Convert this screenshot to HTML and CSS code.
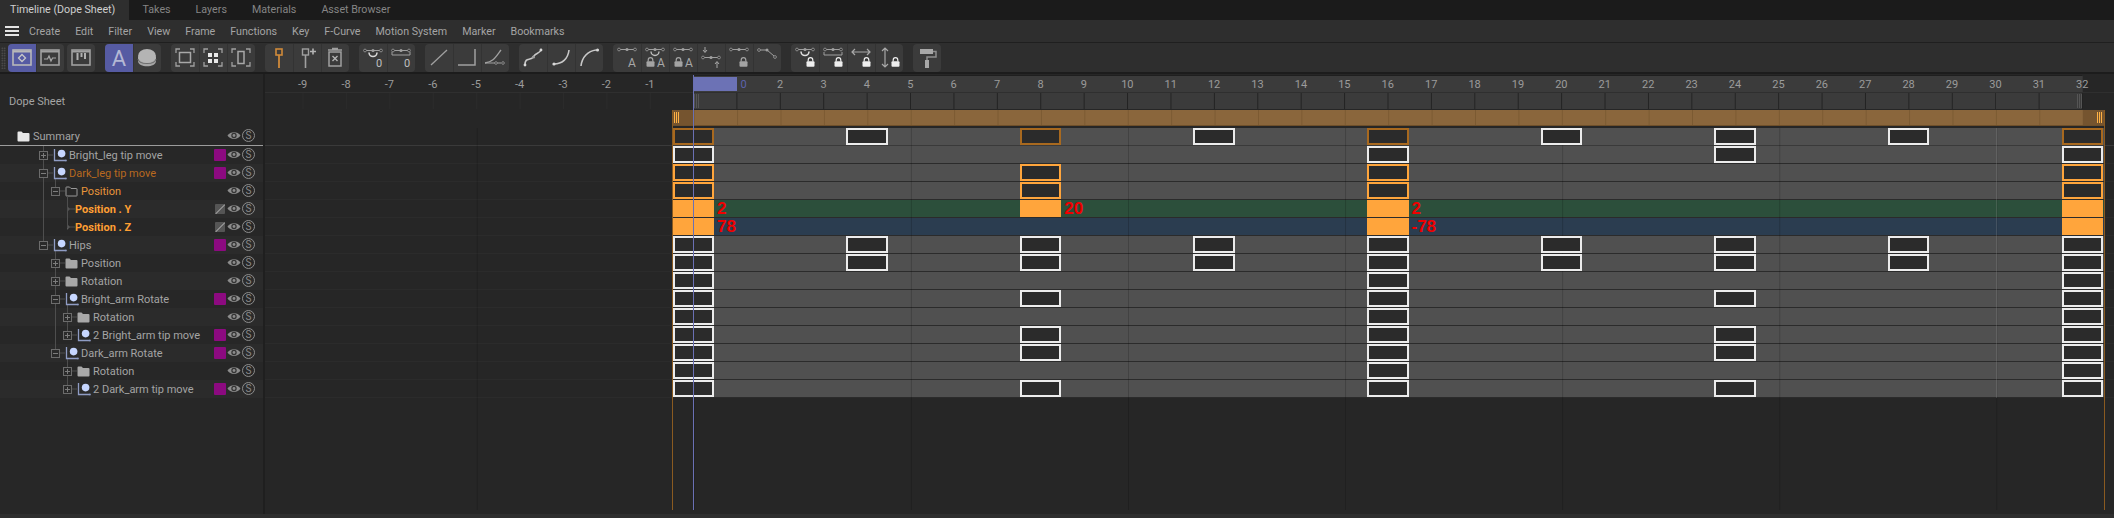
FILE: index.html
```html
<!DOCTYPE html>
<html>
<head>
  <title>Timeline (Dope Sheet)</title>
  <link rel="stylesheet" href="styles.css">
</head>
<body>

<!-- shared icon parts -->
<svg class="defs" width="0" height="0">
  <symbol id="eye" viewBox="0 0 14 11"><path d="M0.5 5.5C3 1 11 1 13.5 5.5C11 10 3 10 0.5 5.5Z" fill="#8c8c8c"/><circle cx="7" cy="5.5" r="2.7" fill="#333"/><circle cx="7" cy="5.5" r="1.4" fill="#8c8c8c"/></symbol>
  <symbol id="plus" viewBox="0 0 9 9"><rect x=".5" y=".5" width="8" height="8" fill="#2a2a2a" stroke="#6c6c6c"/><path d="M2 4.5H7M4.5 2V7" stroke="#7c7c7c"/></symbol>
  <symbol id="minus" viewBox="0 0 9 9"><rect x=".5" y=".5" width="8" height="8" fill="#2a2a2a" stroke="#6c6c6c"/><path d="M2 4.5H7" stroke="#7c7c7c"/></symbol>
  <symbol id="bone" viewBox="0 0 14 14"><path d="M1.5 1V12.5H12" fill="none" stroke="#8f9cc4" stroke-width="1.3"/><circle cx="8.6" cy="5.6" r="3.8" fill="#c6d6ff"/><circle cx="12.8" cy="12.5" r="1.1" fill="#8f9cc4"/></symbol>
  <symbol id="folder" viewBox="0 0 13 11"><path d="M0.5 1.5Q0.5 0.5 1.5 0.5H4.5L6 2H11.5Q12.5 2 12.5 3V9.5Q12.5 10.5 11.5 10.5H1.5Q0.5 10.5 0.5 9.5Z" fill="currentColor"/></symbol>
  <symbol id="folder-open" viewBox="0 0 13 11"><path d="M1 1.5Q1 1 1.5 1H4.5L6 2.5H11.5Q12 2.5 12 3V9.5Q12 10 11.5 10H1.5Q1 10 1 9.5Z" fill="none" stroke="#9a9a9a"/></symbol>
  <symbol id="lock" viewBox="0 0 9 10"><path d="M2.2 4.5V3A2.3 2.3 0 0 1 6.8 3V4.5" fill="none" stroke="currentColor" stroke-width="1.2"/><rect x="0.5" y="4.2" width="8" height="5.6" rx="1" fill="currentColor"/></symbol>
  <symbol id="nodes" viewBox="0 0 20 5"><path d="M3 2.5H17" stroke="#a0a0a0"/><circle cx="2" cy="2.5" r="1.4" fill="#2e2e2e" stroke="#a0a0a0" stroke-width=".8"/><circle cx="10" cy="2.5" r="1.6" fill="#a0a0a0"/><circle cx="18" cy="2.5" r="1.4" fill="#2e2e2e" stroke="#a0a0a0" stroke-width=".8"/></symbol>
  <symbol id="corners" viewBox="0 0 28 27"><path d="M5 9V5H9M19 5H23V9M23 18V22H19M9 22H5V18" fill="none" stroke="#a0a0a0" stroke-width="1.3"/></symbol>
</svg>

<div class="tabs">
  <span class="tab active">Timeline (Dope Sheet)</span>
  <span class="tab">Takes</span>
  <span class="tab">Layers</span>
  <span class="tab">Materials</span>
  <span class="tab">Asset Browser</span>
</div>

<div class="menu">
  <span class="burger"></span>
  <span>Create</span><span>Edit</span><span>Filter</span><span>View</span><span>Frame</span><span>Functions</span><span>Key</span><span>F-Curve</span><span>Motion System</span><span>Marker</span><span>Bookmarks</span>
</div>

<div class="toolbar">
  <span class="grip"></span>
  <div class="pair">
    <div class="group">
      <span class="btn on"><svg viewBox="0 0 28 27"><rect x="5" y="6" width="18" height="15" fill="none" stroke="#b8b8b8" stroke-width="1.6"/><path d="M5 7.5H23" stroke="#b8b8b8" stroke-width="2"/><path d="M14 10.5L17.5 14L14 17.5L10.5 14Z" fill="none" stroke="#c8c8c8" stroke-width="1.3"/></svg></span>
      <span class="btn"><svg viewBox="0 0 28 27"><rect x="5" y="6" width="18" height="15" fill="none" stroke="#a0a0a0" stroke-width="1.6"/><path d="M5 7.5H23" stroke="#a0a0a0" stroke-width="2"/><path d="M8 15H11.5L13 12L15 17L16.5 14H20" fill="none" stroke="#a8a8a8" stroke-width="1.2"/></svg></span>
    </div>
    <div class="group">
      <span class="btn"><svg viewBox="0 0 28 27"><rect x="5" y="6" width="18" height="15" fill="none" stroke="#a0a0a0" stroke-width="1.6"/><path d="M5 7.5H23" stroke="#a0a0a0" stroke-width="2"/><path d="M10.5 9V16M14.5 9V13M18 9V15" stroke="#b0b0b0" stroke-width="2"/></svg></span>
    </div>
  </div>
  <div class="group">
    <span class="btn on"><svg viewBox="0 0 28 27"><text x="14" y="22" text-anchor="middle" font-size="22" fill="#b4b8d4" font-family="Roboto">A</text></svg></span>
    <span class="btn"><svg viewBox="0 0 28 27"><path d="M5 13V17C5 24 23 24 23 17V13Z" fill="#a6a6a6"/><path d="M5 15C6 21 22 21 23 15" fill="none" stroke="#6e6e6e" stroke-width="1.2"/><ellipse cx="14" cy="12" rx="9" ry="7" fill="#b4b4b4"/></svg></span>
  </div>
  <div class="group">
    <span class="btn"><svg viewBox="0 0 28 27"><use href="#corners"/><rect x="8.5" y="8.5" width="11" height="10" fill="none" stroke="#a8a8a8" stroke-width="1.5"/></svg></span>
    <span class="btn"><svg viewBox="0 0 28 27"><use href="#corners"/><path d="M9 9H13V13H9ZM15 9H19V13H15ZM9 15H13V19H9ZM15 15H19V19H15Z" fill="#e8e8e8"/></svg></span>
    <span class="btn"><svg viewBox="0 0 28 27"><use href="#corners"/><rect x="11" y="7.5" width="6" height="12" fill="none" stroke="#a8a8a8" stroke-width="1.5"/></svg></span>
  </div>
  <div class="group">
    <span class="btn"><svg viewBox="0 0 28 27"><rect x="11" y="5" width="6" height="6" fill="none" stroke="#d08a3a" stroke-width="1.6"/><path d="M14 11V24" stroke="#d08a3a" stroke-width="1.8"/></svg></span>
    <span class="btn"><svg viewBox="0 0 28 27"><rect x="9.5" y="5" width="6" height="6" fill="none" stroke="#a0a0a0" stroke-width="1.4"/><path d="M12.5 11V24" stroke="#a0a0a0" stroke-width="1.6"/><path d="M17 7.5H23M20 4.5V10.5" stroke="#b4b4b4" stroke-width="1.6"/></svg></span>
    <span class="btn"><svg viewBox="0 0 28 27"><path d="M8 8H20V22H8Z" fill="none" stroke="#a0a0a0" stroke-width="1.5"/><path d="M7 6H21M11 4.5H17" stroke="#a0a0a0" stroke-width="1.4"/><path d="M11.5 12L16.5 17M16.5 12L11.5 17" stroke="#b4b4b4" stroke-width="1.4"/></svg></span>
  </div>
  <div class="group">
    <span class="btn"><svg viewBox="0 0 28 27"><use href="#nodes" x="4" y="4" width="20" height="5"/><path d="M10 8.5A4 4 0 0 0 18 8.5" fill="none" stroke="#d8d8d8" stroke-width="1.6"/><text x="20" y="23" text-anchor="middle" font-size="11" fill="#c0c0c0" font-family="Roboto">0</text></svg></span>
    <span class="btn"><svg viewBox="0 0 28 27"><use href="#nodes" x="4" y="4" width="20" height="5"/><path d="M5 8V11H23V8" fill="none" stroke="#a0a0a0"/><text x="20" y="23" text-anchor="middle" font-size="11" fill="#c0c0c0" font-family="Roboto">0</text></svg></span>
  </div>
  <div class="group">
    <span class="btn"><svg viewBox="0 0 28 27"><path d="M6 21L22 6" stroke="#a0a0a0" stroke-width="1.3"/></svg></span>
    <span class="btn"><svg viewBox="0 0 28 27"><path d="M5 21H22V5" fill="none" stroke="#a0a0a0" stroke-width="1.5"/></svg></span>
    <span class="btn"><svg viewBox="0 0 28 27"><path d="M4 19C12 18 14 14 20 6" fill="none" stroke="#a0a0a0" stroke-width="1.3"/><path d="M4 19H20" stroke="#a0a0a0"/><circle cx="15" cy="19" r="1.3" fill="#2e2e2e" stroke="#a0a0a0" stroke-width=".8"/><circle cx="22" cy="19" r="1.3" fill="#2e2e2e" stroke="#a0a0a0" stroke-width=".8"/></svg></span>
  </div>
  <div class="group">
    <span class="btn"><svg viewBox="0 0 28 27"><path d="M6 21C6 12 12 18 15 12C17 9 20 10 22 6" fill="none" stroke="#c8c8c8" stroke-width="1.6"/><circle cx="14.5" cy="13" r="1.6" fill="#a0a0a0"/><circle cx="6" cy="21" r="1.4" fill="#d8d8d8"/><circle cx="22" cy="6" r="1.4" fill="#d8d8d8"/></svg></span>
    <span class="btn"><svg viewBox="0 0 28 27"><path d="M7 20C15 20 21 15 22 6" fill="none" stroke="#c8c8c8" stroke-width="1.6"/><circle cx="7" cy="20" r="1.6" fill="#d8d8d8"/></svg></span>
    <span class="btn"><svg viewBox="0 0 28 27"><path d="M6 22C7 13 13 7 21 6" fill="none" stroke="#c8c8c8" stroke-width="1.6"/><circle cx="22.5" cy="6" r="1.6" fill="#d8d8d8"/></svg></span>
  </div>
  <div class="group">
    <span class="btn"><svg viewBox="0 0 28 27"><use href="#nodes" x="4" y="3" width="20" height="5"/><text x="19" y="23" text-anchor="middle" font-size="12" fill="#a8a8a8" font-family="Roboto">A</text></svg></span>
    <span class="btn"><svg viewBox="0 0 28 27"><use href="#nodes" x="4" y="3" width="20" height="5"/><path d="M10 7.5A4 4 0 0 0 18 7.5" fill="none" stroke="#c0c0c0" stroke-width="1.4"/><use href="#lock" class="grey" x="5" y="13" width="9" height="10"/><text x="20" y="23" text-anchor="middle" font-size="12" fill="#a8a8a8" font-family="Roboto">A</text></svg></span>
    <span class="btn"><svg viewBox="0 0 28 27"><use href="#nodes" x="4" y="3" width="20" height="5"/><use href="#lock" class="grey" x="5" y="13" width="9" height="10"/><text x="20" y="23" text-anchor="middle" font-size="12" fill="#a8a8a8" font-family="Roboto">A</text></svg></span>
    <span class="btn"><svg viewBox="0 0 28 27"><path d="M8 3V8M6 6L8 8.5L10 6" fill="none" stroke="#a8a8a8"/><use href="#nodes" x="4" y="11" width="20" height="5"/><path d="M20 24V18M18 20L20 17.5L22 20" fill="none" stroke="#a8a8a8"/></svg></span>
    <span class="btn"><svg viewBox="0 0 28 27"><use href="#nodes" x="4" y="3" width="20" height="5"/><use href="#lock" class="grey" x="14" y="13" width="9" height="10"/></svg></span>
    <span class="btn"><svg viewBox="0 0 28 27"><path d="M7 6H14L21 12" fill="none" stroke="#a0a0a0"/><circle cx="6" cy="6" r="1.4" fill="#2e2e2e" stroke="#a0a0a0" stroke-width=".8"/><circle cx="14" cy="6" r="1.5" fill="#a0a0a0"/><circle cx="22" cy="13" r="1.4" fill="#2e2e2e" stroke="#a0a0a0" stroke-width=".8"/></svg></span>
  </div>
  <div class="group">
    <span class="btn"><svg viewBox="0 0 28 27"><use href="#nodes" x="4" y="3" width="20" height="5"/><path d="M10 7.5A4 4 0 0 0 18 7.5" fill="none" stroke="#e0e0e0" stroke-width="1.6"/><use href="#lock" class="white" x="15" y="13" width="9" height="10"/></svg></span>
    <span class="btn"><svg viewBox="0 0 28 27"><use href="#nodes" x="4" y="3" width="20" height="5"/><path d="M5 8V11H23V8" fill="none" stroke="#a0a0a0"/><use href="#lock" class="white" x="15" y="13" width="9" height="10"/></svg></span>
    <span class="btn"><svg viewBox="0 0 28 27"><path d="M5 8H23M8 5L5 8L8 11M20 5L23 8L20 11" fill="none" stroke="#a8a8a8" stroke-width="1.2"/><use href="#lock" class="white" x="15" y="13" width="9" height="10"/></svg></span>
    <span class="btn"><svg viewBox="0 0 28 27"><path d="M10 4V23M7 7L10 4L13 7M7 20L10 23L13 20" fill="none" stroke="#a8a8a8" stroke-width="1.2"/><use href="#lock" class="white" x="16" y="13" width="9" height="10"/></svg></span>
  </div>
  <div class="group">
    <span class="btn"><svg viewBox="0 0 28 27"><path d="M7 5H20V10H7Z" fill="#a8a8a8"/><path d="M20 7.5H23V13H14V16" fill="none" stroke="#8e8e8e" stroke-width="1.5"/><rect x="12" y="16" width="4" height="8" fill="#a8a8a8"/></svg></span>
  </div>
</div>

<div class="timeline">

  <div class="panel">
    <div class="panel-head">Dope Sheet</div>

    <!-- guide lines of the tree -->
    <svg class="tree-lines" width="263" height="270">
      <path d="M43.5 18V117M55.5 50V62M55.5 122V226M67.5 68V100M67.5 176V208M67.5 230V262M67.5 81H75M67.5 99H75M47 27H53M47 45H53M59 63H65M47 117H53M59 135H65M59 153H65M59 171H65M71 189H77M71 207H77M59 225H65M71 243H77M71 261H77" stroke="#4e4e4e" fill="none"/>
    </svg>

    <div class="row first"><svg class="folder white-folder"><use href="#folder"/></svg><span class="name">Summary</span><div class="tools"><svg class="eye"><use href="#eye"/></svg><span class="solo">S</span></div></div>
    <div class="row l1"><svg class="box"><use href="#plus"/></svg><svg class="bone"><use href="#bone"/></svg><span class="name">Bright_leg tip move</span><div class="tools"><i class="swatch"></i><svg class="eye"><use href="#eye"/></svg><span class="solo">S</span></div></div>
    <div class="row l1"><svg class="box"><use href="#minus"/></svg><svg class="bone"><use href="#bone"/></svg><span class="name dim-orange">Dark_leg tip move</span><div class="tools"><i class="swatch"></i><svg class="eye"><use href="#eye"/></svg><span class="solo">S</span></div></div>
    <div class="row l2"><svg class="box"><use href="#minus"/></svg><svg class="folder"><use href="#folder-open"/></svg><span class="name orange">Position</span><div class="tools"><svg class="eye"><use href="#eye"/></svg><span class="solo">S</span></div></div>
    <div class="row leaf"><i class="arrow"></i><span class="name bold">Position . Y</span><div class="tools"><i class="pen"></i><svg class="eye"><use href="#eye"/></svg><span class="solo">S</span></div></div>
    <div class="row leaf"><i class="arrow"></i><span class="name bold">Position . Z</span><div class="tools"><i class="pen"></i><svg class="eye"><use href="#eye"/></svg><span class="solo">S</span></div></div>
    <div class="row l1"><svg class="box"><use href="#minus"/></svg><svg class="bone"><use href="#bone"/></svg><span class="name">Hips</span><div class="tools"><i class="swatch"></i><svg class="eye"><use href="#eye"/></svg><span class="solo">S</span></div></div>
    <div class="row l2"><svg class="box"><use href="#plus"/></svg><svg class="folder"><use href="#folder"/></svg><span class="name">Position</span><div class="tools"><svg class="eye"><use href="#eye"/></svg><span class="solo">S</span></div></div>
    <div class="row l2"><svg class="box"><use href="#plus"/></svg><svg class="folder"><use href="#folder"/></svg><span class="name">Rotation</span><div class="tools"><svg class="eye"><use href="#eye"/></svg><span class="solo">S</span></div></div>
    <div class="row l2"><svg class="box"><use href="#minus"/></svg><svg class="bone"><use href="#bone"/></svg><span class="name">Bright_arm Rotate</span><div class="tools"><i class="swatch"></i><svg class="eye"><use href="#eye"/></svg><span class="solo">S</span></div></div>
    <div class="row l3"><svg class="box"><use href="#plus"/></svg><svg class="folder"><use href="#folder"/></svg><span class="name">Rotation</span><div class="tools"><svg class="eye"><use href="#eye"/></svg><span class="solo">S</span></div></div>
    <div class="row l3"><svg class="box"><use href="#plus"/></svg><svg class="bone"><use href="#bone"/></svg><span class="name">2 Bright_arm tip move</span><div class="tools"><i class="swatch"></i><svg class="eye"><use href="#eye"/></svg><span class="solo">S</span></div></div>
    <div class="row l2"><svg class="box"><use href="#minus"/></svg><svg class="bone"><use href="#bone"/></svg><span class="name">Dark_arm Rotate</span><div class="tools"><i class="swatch"></i><svg class="eye"><use href="#eye"/></svg><span class="solo">S</span></div></div>
    <div class="row l3"><svg class="box"><use href="#plus"/></svg><svg class="folder"><use href="#folder"/></svg><span class="name">Rotation</span><div class="tools"><svg class="eye"><use href="#eye"/></svg><span class="solo">S</span></div></div>
    <div class="row l3"><svg class="box"><use href="#plus"/></svg><svg class="bone"><use href="#bone"/></svg><span class="name">2 Dark_arm tip move</span><div class="tools"><i class="swatch"></i><svg class="eye"><use href="#eye"/></svg><span class="solo">S</span></div></div>
  </div>

  <div class="sheet">

    <div class="ruler">
      <div class="labels">
        <span>-9</span><span>-8</span><span>-7</span><span>-6</span><span>-5</span><span>-4</span><span>-3</span><span>-2</span><span>-1</span>
        <span><i class="cur-frame"></i></span>
        <span class="cur-label">0</span>
        <span>2</span><span>3</span><span>4</span><span>5</span><span>6</span><span>7</span><span>8</span><span>9</span><span>10</span>
        <span>11</span><span>12</span><span>13</span><span>14</span><span>15</span><span>16</span><span>17</span><span>18</span><span>19</span><span>20</span>
        <span>21</span><span>22</span><span>23</span><span>24</span><span>25</span><span>26</span><span>27</span><span>28</span><span>29</span><span>30</span>
        <span>31</span><span>32</span>
      </div>
      <div class="ticks">
        <div class="ticks-neg"></div>
        <div class="ticks-on"></div>
      </div>
    </div>

    <div class="summary-bar">
      <i class="cap cap-left"></i>
      <i class="cap cap-right"></i>
    </div>

    <div class="tracks">
      <div class="track-row first"><div class="track">
        <i class="key dim k0"></i><i class="key k4"></i><i class="key dim k8"></i><i class="key k12"></i><i class="key dim k16"></i><i class="key k20"></i><i class="key k24"></i><i class="key k28"></i><i class="key dim k32"></i>
      </div></div>
      <div class="track-row"><div class="track">
        <i class="key k0"></i><i class="key k16"></i><i class="key k24"></i><i class="key k32"></i>
      </div></div>
      <div class="track-row"><div class="track">
        <i class="key sel k0"></i><i class="key sel k8"></i><i class="key sel k16"></i><i class="key sel k32"></i>
      </div></div>
      <div class="track-row"><div class="track">
        <i class="key sel k0"></i><i class="key sel k8"></i><i class="key sel k16"></i><i class="key sel k32"></i>
      </div></div>
      <div class="track-row"><div class="track green">
        <i class="key full k0"><b>2</b></i><i class="key full k8"><b>20</b></i><i class="key full k16"><b>2</b></i><i class="key full k32"></i>
      </div></div>
      <div class="track-row"><div class="track blue">
        <i class="key full k0"><b>78</b></i><i class="key full k16"><b>-78</b></i><i class="key full k32"></i>
      </div></div>
      <div class="track-row"><div class="track">
        <i class="key k0"></i><i class="key k4"></i><i class="key k8"></i><i class="key k12"></i><i class="key k16"></i><i class="key k20"></i><i class="key k24"></i><i class="key k28"></i><i class="key k32"></i>
      </div></div>
      <div class="track-row"><div class="track">
        <i class="key k0"></i><i class="key k4"></i><i class="key k8"></i><i class="key k12"></i><i class="key k16"></i><i class="key k20"></i><i class="key k24"></i><i class="key k28"></i><i class="key k32"></i>
      </div></div>
      <div class="track-row"><div class="track">
        <i class="key k0"></i><i class="key k16"></i><i class="key k32"></i>
      </div></div>
      <div class="track-row"><div class="track">
        <i class="key k0"></i><i class="key k8"></i><i class="key k16"></i><i class="key k24"></i><i class="key k32"></i>
      </div></div>
      <div class="track-row"><div class="track">
        <i class="key k0"></i><i class="key k16"></i><i class="key k32"></i>
      </div></div>
      <div class="track-row"><div class="track">
        <i class="key k0"></i><i class="key k8"></i><i class="key k16"></i><i class="key k24"></i><i class="key k32"></i>
      </div></div>
      <div class="track-row"><div class="track">
        <i class="key k0"></i><i class="key k8"></i><i class="key k16"></i><i class="key k24"></i><i class="key k32"></i>
      </div></div>
      <div class="track-row"><div class="track">
        <i class="key k0"></i><i class="key k16"></i><i class="key k32"></i>
      </div></div>
      <div class="track-row"><div class="track">
        <i class="key k0"></i><i class="key k8"></i><i class="key k16"></i><i class="key k24"></i><i class="key k32"></i>
      </div></div>
    </div>

    <!-- lines drawn over the tracks -->
    <div class="grid-lines"></div>
    <div class="range-line left"></div>
    <div class="range-line right"></div>
    <div class="playhead"></div>
  </div>
</div>

<div class="status"></div>

</body>
</html>
```

FILE: styles.css
```css
* {
  box-sizing: border-box;
}
html, body {
  margin: 0;
  height: 518px;
  overflow: hidden;
}
body {
  display: flex;
  flex-direction: column;
  background-color: #262626;
  color: #a4a4a4;
  font-family: Roboto, sans-serif;
  font-size: 11px;
}
.defs {
  position: absolute;
}

/* tabs */
.tabs {
  display: flex;
  height: 20px;
  background-color: #1b1b1b;
  color: #858585;
  font-size: 10.7px;
  line-height: 19px;
  white-space: nowrap;
}
.tab {
  padding: 0 12.5px;
}
.tab.active {
  padding: 0 0 0 10px;
  width: 129px;
  margin-right: 1px;
  background-color: #2e2e2e;
  color: #cfcfcf;
}

/* menu */
.menu {
  display: flex;
  align-items: center;
  gap: 15px;
  height: 23px;
  padding-left: 5px;
  background-color: #2e2e2e;
  border-bottom: 1px solid #1f1f1f;
  font-size: 10.7px;
}
.burger {
  width: 14px;
  height: 10px;
  margin-right: -5px;
  border-top: 2px solid #e4e4e4;
  border-bottom: 2px solid #e4e4e4;
  background: linear-gradient(#e4e4e4, #e4e4e4) 0 2px / 100% 2px no-repeat;
}

/* toolbar */
.toolbar {
  display: flex;
  gap: 10px;
  height: 31px;
  padding: 1px 0 0 7.5px;
  background-color: #2e2e2e;
  border-bottom: 2px solid #1c1c1c;
}
.grip {
  position: absolute;
  left: 1px;
  top: 47px;
  width: 5px;
  height: 22px;
  background: radial-gradient(#5a5a5a 40%, transparent 50%) 0 0 / 2.5px 2.5px;
}
.pair {
  display: flex;
  gap: 3.5px;
}
.group {
  display: flex;
  height: 27.5px;
  border-radius: 4px;
  overflow: hidden;
  background-color: #3b3b3b;
}
.btn {
  width: 28px;
  height: 100%;
  border-left: 1px solid #333;
}
.btn:first-child {
  border-left: 0;
}
.btn.on {
  background-color: #565ba3;
}
.btn svg {
  display: block;
  width: 28px;
  height: 27px;
}
.btn:not(:first-child) svg {
  margin-left: -1px;
}
.grey {
  color: #a4a4a4;
}
.white {
  color: #eee;
}

/* main area */
.timeline {
  display: flex;
  height: 440px;
}
.panel {
  position: relative;
  width: 265px;
  border-right: 2px solid #1f1f1f;
  background-color: #272727;
}
.panel-head {
  height: 54px;
  padding: 19px 0 0 9px;
  line-height: 18px;
}
.tree-lines {
  position: absolute;
  left: 0;
  top: 54px;
  z-index: 1;
}
.row {
  position: relative;
  display: flex;
  align-items: center;
  height: 18px;
  padding-left: 17px;
}
.row:nth-child(odd) {
  background-color: #2b2b2b;
}
.row.first {
  border-bottom: 1px solid #9c9c9c;
  background-color: #272727;
}
.row.l1 {
  padding-left: 39px;
}
.row.l2 {
  padding-left: 51px;
}
.row.l3 {
  padding-left: 63px;
}
.row.leaf {
  padding-left: 67px;
}
.box {
  position: relative;
  z-index: 2;
  width: 9px;
  height: 9px;
  margin-right: 5px;
}
.bone {
  width: 14px;
  height: 14px;
  margin-right: 2px;
  margin-top: -1px;
  position: relative;
  z-index: 2;
}
.folder {
  width: 13px;
  height: 11px;
  margin-right: 3px;
  color: #a8a8a8;
}
.white-folder {
  color: #e8e8e8;
}
.name {
  padding-top: 1px;
  white-space: nowrap;
  line-height: 18px;
}
.dim-orange {
  color: #b8691f;
}
.orange {
  color: #e8953a;
}
.bold {
  color: #ff9f33;
  font-weight: bold;
}
.arrow {
  width: 0;
  height: 0;
  margin-right: 5px;
  border-left: 3px solid #5c5c5c;
  border-top: 3px solid transparent;
  border-bottom: 3px solid transparent;
}
.tools {
  display: flex;
  align-items: center;
  margin-left: auto;
  padding-right: 8px;
}
.swatch {
  width: 12px;
  height: 12px;
  margin-right: 1px;
  border-radius: 1px;
  background-color: #8c0a80;
}
.pen {
  width: 10px;
  height: 10px;
  margin-right: 2px;
  border-radius: 1px;
  background: linear-gradient(135deg, #555 46%, #8a8a8a 46% 58%, #555 58%);
}
.eye {
  width: 14px;
  height: 11px;
  margin-top: -2px;
}
.solo {
  width: 13px;
  height: 13px;
  margin: -2px 0 0 1px;
  border: 1px solid #8c8c8c;
  border-radius: 50%;
  color: #8c8c8c;
  font-size: 10px;
  line-height: 11px;
  text-align: center;
}

/* right side */
.sheet {
  position: relative;
  flex: 1;
}
.ruler {
  height: 35px;
}
.labels {
  display: grid;
  grid-template-columns: repeat(42, 43.42px);
  height: 19px;
  padding-left: 15.9px;
  text-align: center;
  line-height: 21px;
  color: #9c9c9c;
  border-bottom: 1px solid #2f2f2f;
  background:
    linear-gradient(#1f1f1f, #1f1f1f) 428.3px 1px / 1389.7px 1px no-repeat,
    linear-gradient(#232323, #232323) 428.3px 18px / 1389.7px 1px no-repeat,
    linear-gradient(#3b3b3b, #3b3b3b) 428.3px 1px / 1389.7px 18px no-repeat;
}
.labels span {
  position: relative;
  white-space: nowrap;
}
.cur-label {
  padding-left: 14px;
  color: #5d63ad;
}
.cur-frame {
  position: absolute;
  left: 21.4px;
  top: 3px;
  width: 44px;
  height: 14px;
  background-color: #6c72b5;
}
.ticks {
  display: flex;
  height: 16px;
}
.ticks-neg {
  width: 428.3px;
  background: linear-gradient(90deg, #2b2b2b 1px, transparent 1px) 37.5px 0 / 43.42px 100%;
}
.ticks-on {
  position: relative;
  width: 1389.7px;
  background:
    linear-gradient(#3b3b3b, #3b3b3b) 1302.6px 0 / 1px 100% no-repeat,
    linear-gradient(90deg, #222 1px, transparent 1px) 0 0 / 43.42px 100%,
    #3b3b3b;
}
.ticks-on::before,
.ticks-on::after {
  content: "";
  position: absolute;
  top: 1px;
  bottom: 1px;
  width: 6px;
  background: linear-gradient(90deg, #555 1px, transparent 1px) 0 0 / 2px 100%;
}
.ticks-on::before {
  left: 1px;
}
.ticks-on::after {
  right: 0;
}
.summary-bar {
  position: relative;
  width: 1432.9px;
  height: 16px;
  margin: 1px 0 2px 406.6px;
  background: linear-gradient(90deg, #7b5a32 1px, transparent 1px) 21.7px 0 / 43.42px 100%, #8a663c;
  border-bottom: 1px solid #6e4f2a;
}
.cap {
  position: absolute;
  top: 0;
  bottom: 0;
  width: 21.7px;
  background-color: #75542f;
}
.cap::after {
  content: "";
  position: absolute;
  top: 2px;
  bottom: 2px;
  width: 5px;
  background: linear-gradient(90deg, #ffb144 1px, transparent 1px) 0 0 / 2px 100%;
}
.cap-left {
  left: 0;
}
.cap-left::after {
  left: 2.5px;
}
.cap-right {
  right: 0;
}
.cap-right::after {
  right: 2.5px;
}

/* key tracks */
.track-row {
  height: 18px;
  padding-left: 406.6px;
  border-bottom: 1px solid #2b2b2b;
}
.track-row.first {
  border-bottom-color: #3a3a3a;
}
.track {
  display: grid;
  grid-template-columns: repeat(33, 43.42px);
  width: 1432.9px;
  height: 17px;
  background-color: #505050;
}
.track.green {
  background-color: #2c4f3b;
}
.track.blue {
  background-color: #2b3d50;
}
.key {
  position: relative;
  z-index: 1;
  grid-row: 1;
  margin: 0 1px;
  border: 2px solid #ececec;
  background-color: #2b2b2b;
  font-style: normal;
}
.key.dim {
  border-color: #a8691f;
}
.key.sel {
  border-color: #ffa53c;
}
.key.full {
  border: 0;
  background-color: #ffa53c;
}
.key b {
  position: absolute;
  left: 100%;
  top: 0;
  margin-left: 3px;
  color: #f00000;
  font-family: "Liberation Sans", sans-serif;
  font-size: 17px;
  line-height: 17px;
}
.k0 { grid-column: 1; }
.k4 { grid-column: 5; }
.k8 { grid-column: 9; }
.k12 { grid-column: 13; }
.k16 { grid-column: 17; }
.k20 { grid-column: 21; }
.k24 { grid-column: 25; }
.k28 { grid-column: 29; }
.k32 { grid-column: 33; }

/* overlays */
.grid-lines {
  position: absolute;
  left: 0;
  right: 0;
  top: 54px;
  bottom: 4px;
  background: linear-gradient(90deg, rgba(0, 0, 0, .18) 1px, transparent 1px) 211.7px 0 / 217.1px 100%;
}
.grid-lines::after {
  content: "";
  position: absolute;
  left: 1731.4px;
  top: 0;
  width: 1px;
  height: 270px;
  background-color: rgba(255, 255, 255, .14);
}
.playhead {
  position: absolute;
  left: 428px;
  top: 1px;
  bottom: 4px;
  z-index: 2;
  width: 1px;
  background-color: #6a70b4;
}
.range-line {
  position: absolute;
  top: 36px;
  bottom: 4px;
  z-index: 2;
  width: 1px;
  background-color: #8a5a20;
}
.range-line.left {
  left: 407px;
}
.range-line.right {
  left: 1839px;
}
.status {
  flex: 1;
  background-color: #2e2e2e;
}
```
